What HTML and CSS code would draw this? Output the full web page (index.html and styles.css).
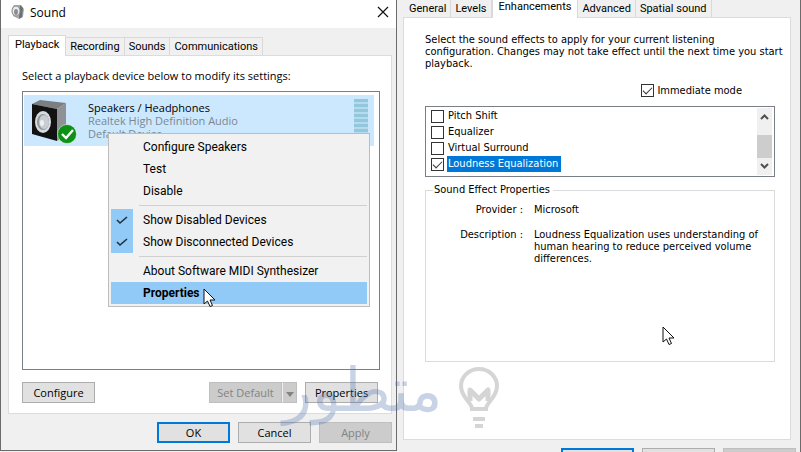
FILE: index.html
```
<!DOCTYPE html>
<html lang="en">
<head>
    <meta charset="UTF-8">
    <meta name="viewport" content="width=device-width, initial-scale=1.0">
    <title>Sound</title>
    <link rel="stylesheet" href="styles.css">
</head>
<body>

    <main class="window sound">
        <header class="titlebar">
            <svg class="app-icon" width="14" height="16" viewBox="0 0 14 16">
                <path d="M3 1l7 0 3 4-1 8-4 2-6-3-1-8z" fill="#a9acae"/>
                <path d="M9 1l3 3-1 9-3 2z" fill="#6c6f72"/>
                <ellipse cx="5" cy="7" rx="4" ry="5" fill="#e9ebec" stroke="#888"/>
                <ellipse cx="5" cy="8" rx="2" ry="3" fill="#8b8f92"/>
            </svg>
            <h1>Sound</h1>
            <button class="close" aria-label="Close">
                <svg width="12" height="12" viewBox="0 0 12 12"><path d="M1 1l10 10M11 1L1 11" stroke="#111" stroke-width="1.2"/></svg>
            </button>
        </header>

        <nav class="tabs">
            <button class="tab active">Playback</button>
            <button class="tab">Recording</button>
            <button class="tab">Sounds</button>
            <button class="tab">Communications</button>
        </nav>

        <section class="panel">
            <p>Select a playback device below to modify its settings:</p>
            <div class="device-list">
                <div class="device">
                    <svg class="speaker" width="46" height="46" viewBox="0 0 46 46">
                        <path d="M1 5L9 1l26 3-9 6z" fill="#7c7e80"/>
                        <path d="M26 10l9-6v32l-9 6z" fill="#8f9194"/>
                        <path d="M1 5l25 5v32L1 35z" fill="#121212"/>
                        <ellipse cx="12" cy="23" rx="8" ry="11" fill="#d9dcde"/>
                        <ellipse cx="12" cy="23" rx="6" ry="8" fill="#8f979b"/>
                        <ellipse cx="13" cy="23" rx="5" ry="7" fill="#c7cdd0"/>
                        <ellipse cx="11" cy="24" rx="2" ry="3" fill="#eef1f2"/>
                        <circle cx="36" cy="35" r="9.500" fill="#0f9016" stroke="#fff" stroke-opacity=".5"/>
                        <path d="M31 35l4 4 7-8" fill="none" stroke="#fff" stroke-width="2.4"/>
                    </svg>
                    <div class="device-text">
                        <strong>Speakers / Headphones</strong>
                        <span>Realtek High Definition Audio</span>
                        <span>Default Device</span>
                    </div>
                    <div class="meter"></div>
                </div>
            </div>
            <div class="panel-buttons">
                <button class="btn">Configure</button>
                <div class="split">
                    <button class="btn" disabled>Set Default</button>
                    <button class="btn arrow" disabled aria-label="More defaults">
                        <svg width="8" height="5" viewBox="0 0 8 5"><path d="M0 0h8L4 5z" fill="#838383"/></svg>
                    </button>
                </div>
                <button class="btn">Properties</button>
            </div>
        </section>

        <footer class="dialog-buttons">
            <button class="btn default">OK</button>
            <button class="btn">Cancel</button>
            <button class="btn" disabled>Apply</button>
        </footer>

        <div class="menu">
            <button>Configure Speakers</button>
            <button>Test</button>
            <button>Disable</button>
            <hr>
            <button class="checked"><i><svg width="12" height="9" viewBox="0 0 12 9"><path d="M1 4l3 3 7-6" fill="none" stroke="#222f3c" stroke-width="1.6"/></svg></i>Show Disabled Devices</button>
            <button class="checked"><i><svg width="12" height="9" viewBox="0 0 12 9"><path d="M1 4l3 3 7-6" fill="none" stroke="#222f3c" stroke-width="1.6"/></svg></i>Show Disconnected Devices</button>
            <hr>
            <button>About Software MIDI Synthesizer</button>
            <button class="selected">Properties</button>
            <svg class="cursor" width="13" height="20" viewBox="0 0 13 20"><path d="M1 1v15l3.500-3 2.500 5.500 2.500-1L7 12h5z" fill="#fff" stroke="#111"/></svg>
        </div>
    </main>

    <aside class="window effects">
        <nav class="tabs">
            <button class="tab">General</button>
            <button class="tab">Levels</button>
            <button class="tab active">Enhancements</button>
            <button class="tab">Advanced</button>
            <button class="tab">Spatial sound</button>
        </nav>

        <section class="panel">
            <p>Select the sound effects to apply for your current listening<br>configuration. Changes may not take effect until the next time you start playback.</p>
            <label class="immediate"><input type="checkbox" checked>Immediate mode</label>

            <div class="effect-list">
                <div class="effect-items">
                    <label><input type="checkbox"><span>Pitch Shift</span></label>
                    <label><input type="checkbox"><span>Equalizer</span></label>
                    <label><input type="checkbox"><span>Virtual Surround</span></label>
                    <label class="selected"><input type="checkbox" checked><span>Loudness Equalization</span></label>
                </div>
                <div class="scrollbar">
                    <svg width="9" height="6" viewBox="0 0 9 6"><path d="M1 5l3.500-3.500L8 5" fill="none" stroke="#505050" stroke-width="2"/></svg>
                    <div class="thumb"></div>
                    <svg width="9" height="6" viewBox="0 0 9 6"><path d="M1 1l3.500 3.500L8 1" fill="none" stroke="#505050" stroke-width="2"/></svg>
                </div>
            </div>

            <fieldset>
                <legend>Sound Effect Properties</legend>
                <dl>
                    <dt>Provider :</dt>
                    <dd>Microsoft</dd>
                    <dt>Description :</dt>
                    <dd>Loudness Equalization uses understanding of human hearing to reduce perceived volume differences.</dd>
                </dl>
                <svg class="cursor" width="13" height="20" viewBox="0 0 13 20"><path d="M1 1v15l3.500-3 2.500 5.500 2.500-1L7 12h5z" fill="#fff" stroke="#111"/></svg>
            </fieldset>
        </section>

        <footer class="dialog-buttons">
            <button class="btn default" aria-label="OK"></button>
            <button class="btn" aria-label="Cancel"></button>
            <button class="btn" disabled aria-label="Apply"></button>
        </footer>
    </aside>

    <div class="watermark">
        <span lang="ar" dir="rtl">متطور</span>
        <svg width="42" height="64" viewBox="0 0 42 64" fill="none" stroke="#777">
            <path d="M14 43C14 36 3 32 3 20a18 17 0 0 1 36 0C39 32 28 36 28 43z" stroke-width="4"/>
            <path d="M12 35V24l9 9 9-9v11" stroke-width="5" stroke-linejoin="round"/>
            <path d="M15 53h12M17 60h8" stroke-width="4"/>
        </svg>
    </div>

</body>
</html>
```
FILE: styles.css
```
* {
    box-sizing: border-box;
}
body {
    margin: 0;
    height: 100vh;
    display: grid;
    grid-template-columns: 397fr 404fr;
    grid-template-rows: 100vh;
    overflow: hidden;
    position: relative;
    background-color: #f0f0f0;
    color: #000;
    font-family: "Open Sans", "Noto Sans", sans-serif;
    font-size: 11px;
}
button {
    font: inherit;
    color: inherit;
    padding: 0;
    border: none;
    background: none;
}
p {
    margin: 0;
}
.window {
    position: relative;
    display: flex;
    flex-direction: column;
    background-color: #f0f0f0;
    border: 1px solid #6b6b6b;
}
.sound {
    margin-bottom: 1px;
    border-top: none;
}
.effects {
    border-width: 0 1px 0 0;
    font-family: "DejaVu Sans Condensed", "DejaVu Sans", sans-serif;
}

/* title bar */
.titlebar {
    display: flex;
    align-items: center;
    height: 28px;
    padding: 0 7px 4px 10px;
    background-color: #fff;
}
.titlebar h1 {
    flex: 1;
    margin: 0 0 0 5px;
    font-size: 12px;
    font-weight: normal;
}
.close {
    display: flex;
}

/* tabs */
.tabs {
    display: flex;
    align-items: flex-end;
    height: 27px;
    padding-left: 7px;
    font-family: Roboto, sans-serif;
}
.tab {
    height: 18px;
    padding: 0 4px;
    border: 1px solid #d9d9d9;
    border-bottom: none;
    border-left-width: 0;
    background-color: #f0f0f0;
}
.tab.active {
    height: 21px;
    margin-bottom: -1px;
    padding: 0 6px 3px;
    border-left-width: 1px;
    background-color: #fff;
    z-index: 1;
}
.panel {
    background-color: #fff;
    border: 1px solid #dcdcdc;
}

/* playback devices */
.sound .panel {
    flex: 1;
    display: flex;
    flex-direction: column;
    margin: 0 4px 0 7px;
    padding: 12px 11px 10px 13px;
}
.sound .panel p {
    line-height: 16px;
    margin-bottom: 7px;
}
.device-list {
    flex: 1;
    border: 1px solid #7a7f87;
    padding: 3px 5px 0 1px;
}
.device {
    display: flex;
    height: 51px;
    padding: 4px 6px 0 7px;
    background-color: #cce8ff;
}
.device-text {
    flex: 1;
    display: flex;
    flex-direction: column;
    padding-left: 11px;
    line-height: 13px;
    padding-top: 2px;
    color: #7b8790;
}
.device-text strong {
    font-weight: normal;
    color: #000;
}
.meter {
    width: 14px;
    height: 42px;
    background: repeating-linear-gradient(#92c7dd 0 3px, #b5dbee 3px 5px);
}
.panel-buttons {
    display: flex;
    gap: 8px;
    margin-top: 12px;
    padding-right: 2px;
}
.split {
    display: flex;
    margin-left: auto;
}
.btn {
    width: 73px;
    height: 21px;
    border: 1px solid #adadad;
    background-color: #e1e1e1;
}
.btn:disabled {
    background-color: #ccc;
    border-color: #bfbfbf;
    color: #838383;
}
.btn.default {
    border: 2px solid #0078d7;
}
.btn.arrow {
    width: 15px;
    border-left-color: #f0f0f0;
}
.dialog-buttons {
    display: flex;
    justify-content: flex-end;
    gap: 8px;
    padding: 8px 4px 7px;
}

/* context menu */
.menu {
    position: absolute;
    left: 107px;
    top: 133px;
    width: 262px;
    padding: 2px;
    border: 1px solid #bdbdbd;
    background-color: #f1f1f1;
    font-family: Roboto, sans-serif;
    font-size: 12px;
}
.menu button {
    display: flex;
    align-items: center;
    position: relative;
    width: 100%;
    height: 22px;
    padding-left: 32px;
}
.menu hr {
    height: 1px;
    margin: 3px 0 3px 28px;
    border: none;
    background-color: #d0d0d0;
}
.menu .selected {
    background-color: #91c9f7;
    font-weight: bold;
}
.menu i {
    position: absolute;
    left: 0;
    top: 0;
    width: 22px;
    height: 22px;
    display: flex;
    align-items: center;
    justify-content: center;
    background-color: #91c9f7;
}
.menu .cursor {
    position: absolute;
    left: 94px;
    top: 154px;
}

/* enhancements */
.effects .tabs {
    height: 17px;
    padding-left: 8px;
}
.effects .panel {
    margin: 0 9px 0 6px;
    padding: 16px 15px 77px 21px;
}
.effects .panel p {
    margin-right: -13px;
    line-height: 12px;
}
.immediate {
    display: flex;
    align-items: center;
    justify-content: flex-end;
    gap: 3px;
    margin: 14px 33px 9px 0;
    line-height: 13px;
}
input[type="checkbox"] {
    appearance: none;
    width: 13px;
    height: 13px;
    margin: 0;
    border: 1px solid #333;
    background-color: #fff;
}
input[type="checkbox"]:checked {
    display: flex;
    align-items: center;
    justify-content: center;
}
input[type="checkbox"]:checked::before {
    content: "";
    width: 8px;
    height: 4px;
    margin-top: -2px;
    border: solid #333;
    border-width: 0 0 1px 1px;
    transform: rotate(-45deg);
}
.effect-list {
    display: flex;
    justify-content: space-between;
    height: 71px;
    padding: 1px 2px 1px 5px;
    border: 1px solid #7a7f87;
}
.effect-items label {
    display: flex;
    align-items: center;
    height: 16px;
    gap: 3px;
}
.effect-items span {
    padding: 0 3px 0 1px;
    line-height: 16px;
}
.effect-items .selected span {
    background-color: #0078d7;
    color: #fff;
}
.scrollbar {
    display: flex;
    flex-direction: column;
    align-items: center;
    width: 15px;
    padding: 6px 0;
    background-color: #f0f0f0;
}
.thumb {
    width: 15px;
    height: 23px;
    margin: auto 0 5px;
    background-color: #cdcdcd;
}
fieldset {
    position: relative;
    height: 179px;
    margin: 6px 0 0;
    padding: 7px 8px 0 7px;
    border: 1px solid #dcdcdc;
}
legend {
    padding: 0 3px 0 1px;
    line-height: 14px;
}
dl {
    display: grid;
    grid-template-columns: 90px 1fr;
    gap: 13px 11px;
    margin: 0;
    line-height: 12px;
}
dt {
    text-align: right;
}
dd {
    margin: 0;
}
fieldset .cursor {
    position: absolute;
    left: 236px;
    top: 129px;
}

/* watermark lies over both windows */
.watermark {
    position: absolute;
    left: 283px;
    top: 366px;
    display: flex;
    align-items: flex-start;
    gap: 16px;
    opacity: 0.3;
    color: #5070b0;
    font-family: "DejaVu Sans", sans-serif;
    font-size: 60px;
    line-height: 48px;
    pointer-events: none;
}
```
